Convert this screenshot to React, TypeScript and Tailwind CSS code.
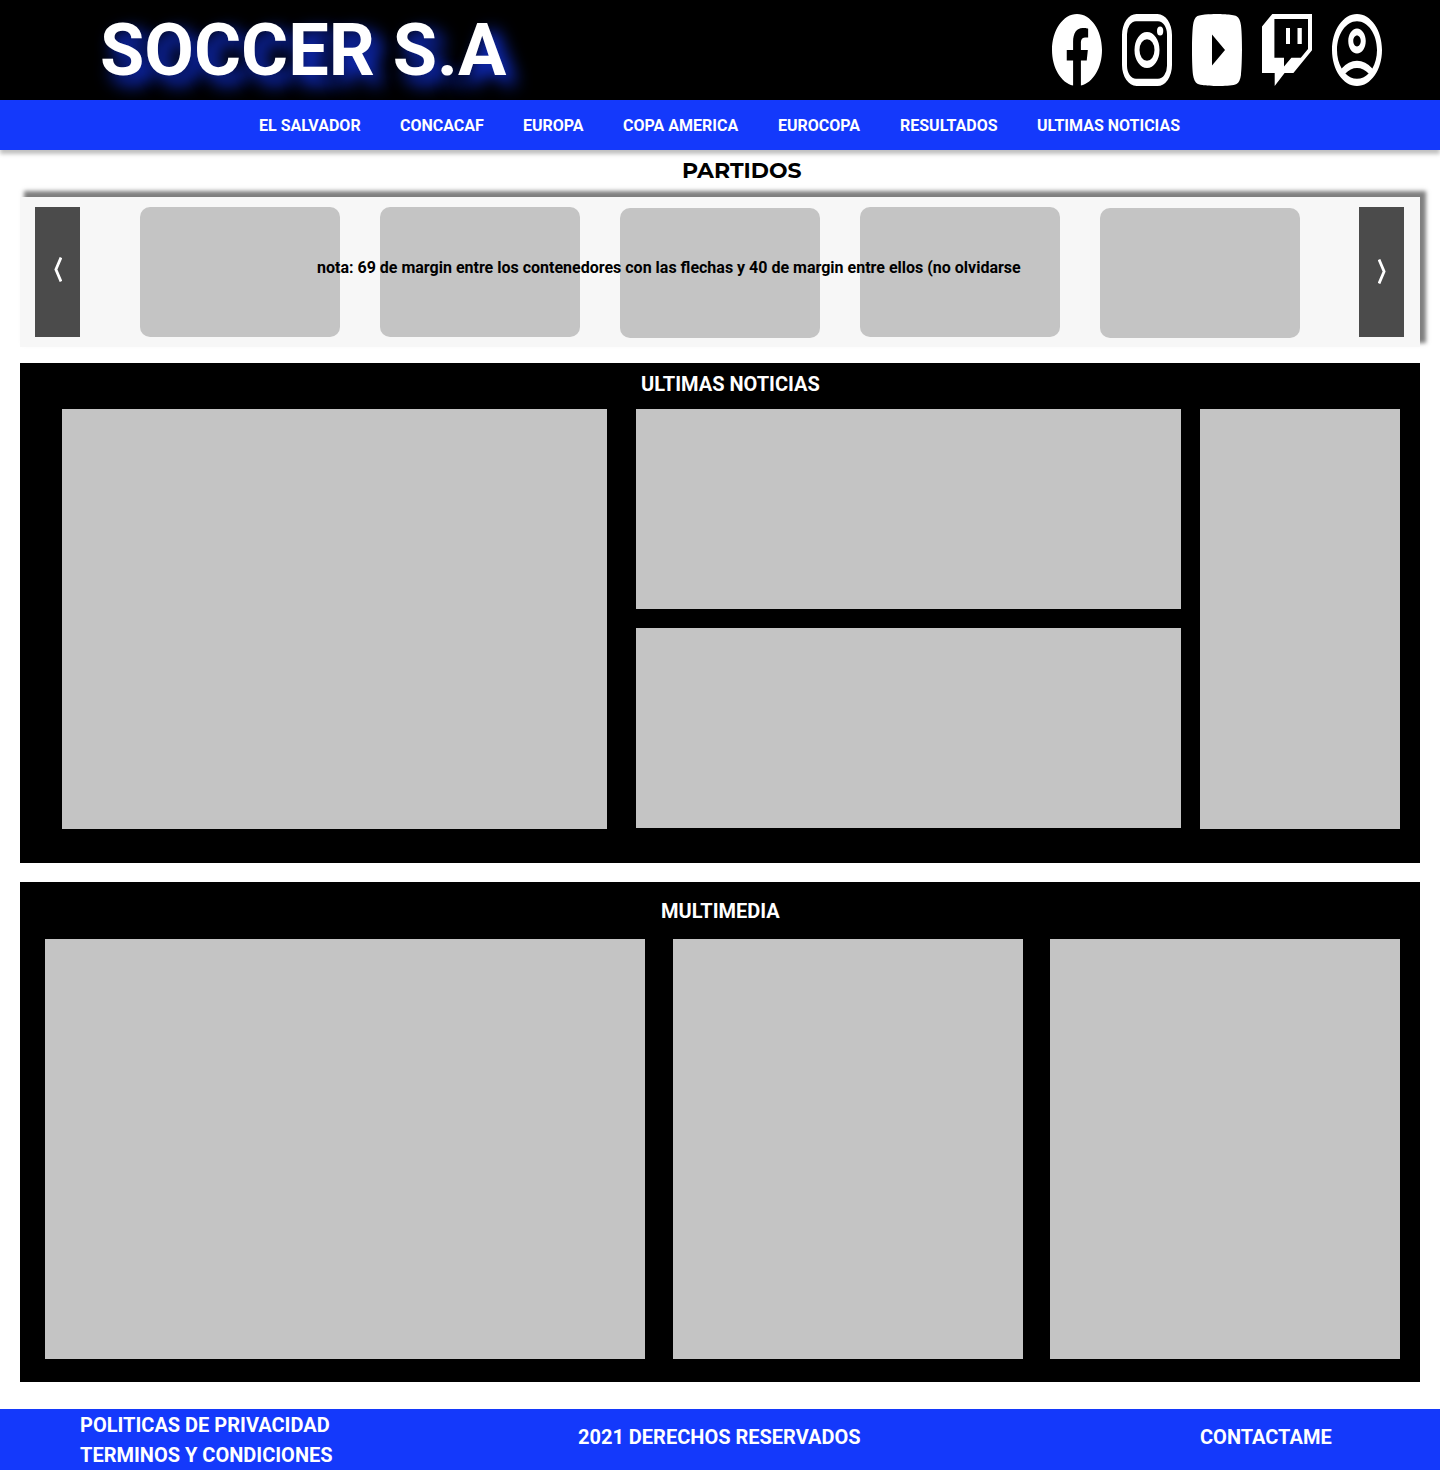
import React from "react";

const NAV = [
  { label: "EL SALVADOR", w: "w-[141px]" },
  { label: "CONCACAF", w: "w-[123px]" },
  { label: "EUROPA", w: "w-[100px]" },
  { label: "COPA AMERICA", w: "w-[155px]" },
  { label: "EUROCOPA", w: "w-[122px]" },
  { label: "RESULTADOS", w: "w-[137px]" },
  { label: "ULTIMAS NOTICIAS", w: "w-[160px]" },
];

const ICONS = [
  {
    name: "Facebook",
    box: "2 2 20 20",
    d: "M12.001 2.002c-5.522 0-9.999 4.477-9.999 9.999 0 4.99 3.656 9.126 8.437 9.879v-6.988h-2.54v-2.891h2.54V9.798c0-2.508 1.493-3.891 3.776-3.891 1.094 0 2.24.195 2.24.195v2.459h-1.264c-1.24 0-1.628.772-1.628 1.563v1.875h2.771l-.443 2.891h-2.328v6.988C18.344 21.129 22 16.992 22 12.001c0-5.522-4.477-9.999-9.999-9.999z",
  },
  {
    name: "Instagram",
    box: "2 2 20 20",
    d: "M7.8 2h8.4C19.4 2 22 4.6 22 7.8v8.4a5.8 5.8 0 0 1-5.8 5.8H7.8C4.6 22 2 19.4 2 16.2V7.8A5.8 5.8 0 0 1 7.8 2m-.2 2A3.6 3.6 0 0 0 4 7.6v8.8C4 18.39 5.61 20 7.6 20h8.8a3.6 3.6 0 0 0 3.6-3.6V7.6C20 5.61 18.39 4 16.4 4H7.6m9.65 1.5a1.25 1.25 0 0 1 1.25 1.25A1.25 1.25 0 0 1 17.25 8 1.25 1.25 0 0 1 16 6.75a1.25 1.25 0 0 1 1.25-1.25M12 7a5 5 0 0 1 5 5 5 5 0 0 1-5 5 5 5 0 0 1-5-5 5 5 0 0 1 5-5m0 2a3 3 0 0 0-3 3 3 3 0 0 0 3 3 3 3 0 0 0 3-3 3 3 0 0 0-3-3z",
  },
  {
    name: "YouTube",
    box: "2 5 20 14",
    d: "M21.593 7.203a2.506 2.506 0 0 0-1.762-1.766C18.265 5.007 12 5 12 5s-6.264-.007-7.831.404a2.56 2.56 0 0 0-1.766 1.778c-.413 1.566-.417 4.814-.417 4.814s-.004 3.264.406 4.814c.23.857.905 1.534 1.763 1.765 1.582.43 7.83.437 7.83.437s6.265.007 7.831-.403a2.515 2.515 0 0 0 1.767-1.763c.414-1.565.417-4.812.417-4.812s.02-3.265-.407-4.831zM9.996 15.005l.005-6 5.207 3.005-5.212 2.995z",
  },
  {
    name: "Twitch",
    box: "0 0 50 72",
    d: "M10.3 0H50V36.2L31.4 59H22.6L12.7 72V59H0V12.4ZM12.4 5V43.8H22V52.6L29.4 43.8H38.8L46 35V5ZM24 14H28V30H24ZM35.5 14H39.8V30H35.5Z",
  },
  {
    name: "Cuenta",
    box: "2 2 20 20",
    d: "M12 2C6.48 2 2 6.48 2 12s4.48 10 10 10 10-4.48 10-10S17.52 2 12 2zM7.35 18.5C8.66 17.56 10.26 17 12 17s3.34.56 4.65 1.5C15.34 19.44 13.74 20 12 20s-3.34-.56-4.65-1.5zm10.79-1.38a9.947 9.947 0 0 0-12.28 0A7.957 7.957 0 0 1 4 12c0-4.42 3.58-8 8-8s8 3.58 8 8c0 1.95-.7 3.73-1.86 5.12zM12 6c-1.93 0-3.5 1.57-3.5 3.5S10.07 13 12 13s3.5-1.57 3.5-3.5S13.93 6 12 6zm0 5c-.83 0-1.5-.67-1.5-1.5S11.17 8 12 8s1.5.67 1.5 1.5S12.83 11 12 11z",
  },
];

function Arrow({ d, className }: { d: string; className: string }) {
  return (
    <button className="flex h-[130px] w-[45px] shrink-0 items-start justify-center bg-[#4b4b4b]">
      <svg viewBox="0 0 8 25" className={`h-[25px] w-2 ${className}`} fill="none" stroke="white" strokeWidth="2.8">
        <path d={d} />
      </svg>
    </button>
  );
}

export default function App() {
  return (
    <div className="flex h-[1470px] w-[1440px] flex-col overflow-hidden bg-white font-['Roboto',sans-serif] font-bold">
      <header className="flex h-[100px] shrink-0 items-start justify-between bg-black pr-[58px] pl-[100px]">
        <h1 className="pt-[9px] text-[72px] leading-[84px] whitespace-nowrap text-white [text-shadow:9px_9px_17px_#1439fb]">
          SOCCER S.A
        </h1>
        <div className="flex gap-5 pt-[14px]">
          {ICONS.map((icon) => (
            <svg
              key={icon.name}
              aria-label={icon.name}
              viewBox={icon.box}
              preserveAspectRatio="none"
              className="h-[72px] w-[50px]"
              fill="white"
              fillRule="evenodd"
            >
              <path d={icon.d} />
            </svg>
          ))}
        </div>
      </header>

      <nav className="relative z-10 flex h-[50px] shrink-0 items-center bg-[#1439fb] pt-[2px] pl-[259px] text-base text-white shadow-[0_4px_4px_rgba(0,0,0,0.25)]">
        {NAV.map((item) => (
          <a key={item.label} className={`${item.w} shrink-0 whitespace-nowrap`}>
            {item.label}
          </a>
        ))}
      </nav>

      <h2 className="h-[47px] shrink-0 pt-[7px] pl-[682px] font-['Montserrat','Inter',sans-serif] text-[22px] leading-[28px]">
        PARTIDOS
      </h2>

      <section className="relative mx-5 flex h-[150px] shrink-0 items-start bg-[#f7f7f7] pt-[10px] pl-[15px] shadow-[5px_-5px_4px_1px_rgba(0,0,0,0.5)]">
        <Arrow d="M7 .5L1.9 12.5L7 24.5" className="mt-[50px]" />
        <div className="mr-[59px] ml-[60px] flex gap-10">
          <div className="h-[130px] w-[200px] rounded-[10px] bg-[#c4c4c4]" />
          <div className="h-[130px] w-[200px] rounded-[10px] bg-[#c4c4c4]" />
          <div className="mt-px h-[130px] w-[200px] rounded-[10px] bg-[#c4c4c4]" />
          <div className="h-[130px] w-[200px] rounded-[10px] bg-[#c4c4c4]" />
          <div className="mt-px h-[130px] w-[200px] rounded-[10px] bg-[#c4c4c4]" />
        </div>
        <Arrow d="M1 .5L6.1 12.5L1 24.5" className="mt-[52px]" />
        <p className="absolute top-[61px] left-[297px] text-base leading-[19px] whitespace-nowrap">
          nota: 69 de margin entre los contenedores con las flechas y 40 de margin entre ellos (no olvidarse
        </p>
      </section>

      <section className="mx-5 mt-4 h-[500px] shrink-0 bg-black">
        <h2 className="h-[46px] pt-[9px] pl-[621px] text-xl leading-[24px] text-white">ULTIMAS NOTICIAS</h2>
        <div className="flex pl-[42px]">
          <div className="mr-[29px] h-[420px] w-[545px] bg-[#c4c4c4]" />
          <div className="mr-[19px] flex flex-col gap-[19px]">
            <div className="h-[200px] w-[545px] bg-[#c4c4c4]" />
            <div className="h-[200px] w-[545px] bg-[#c4c4c4]" />
          </div>
          <div className="h-[420px] w-[200px] bg-[#c4c4c4]" />
        </div>
      </section>

      <section className="mx-5 mt-[19px] h-[500px] shrink-0 bg-black">
        <h2 className="h-[57px] pt-[17px] pl-[641px] text-xl leading-[24px] text-white">MULTIMEDIA</h2>
        <div className="flex pl-[25px]">
          <div className="mr-[28px] h-[420px] w-[600px] bg-[#c4c4c4]" />
          <div className="mr-[27px] h-[420px] w-[350px] bg-[#c4c4c4]" />
          <div className="h-[420px] w-[350px] bg-[#c4c4c4]" />
        </div>
      </section>

      <footer className="mt-[27px] flex h-[61px] shrink-0 bg-[#1439fb] pl-20 text-xl text-white">
        <div className="flex w-[498px] flex-col pt-[1px] leading-[30px]">
          <a>POLITICAS DE PRIVACIDAD</a>
          <a>TERMINOS Y CONDICIONES</a>
        </div>
        <p className="w-[622px] pt-[13px] leading-[30px]">2021 DERECHOS RESERVADOS</p>
        <a className="pt-[13px] leading-[30px]">CONTACTAME</a>
      </footer>
    </div>
  );
}
